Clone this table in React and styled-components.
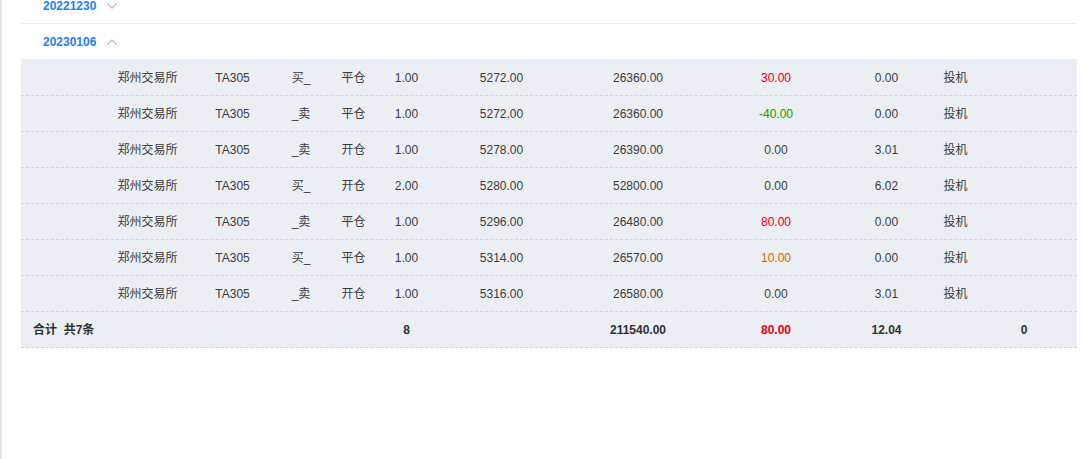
import React from "react";
import styled, { createGlobalStyle } from "styled-components";

const GlobalStyle = createGlobalStyle`
  html, body {
    margin: 0;
    padding: 0;
    background: #ffffff;
  }
  body {
    font-family: "Liberation Sans", "Noto Sans CJK SC", Arial, sans-serif;
    font-size: 12px;
    color: #333333;
  }
`;

const COLS = "84px 85px 85px 52px 53px 53px 137px 136px 140px 81px 57px 80px 1fr";

const Page = styled.div`
  height: 459px;
  overflow: hidden;
  border-left: 2px solid #e6e6e6;
  padding: 0 15px 0 19px;
  box-sizing: border-box;
`;

const List = styled.div`
  margin-top: -12px;
`;

const GroupHeader = styled.div`
  height: 35px;
  border-bottom: 1px solid #ebeef5;
  display: flex;
  align-items: center;
  gap: 11px;
  padding-left: 22px;
  color: #2680eb;
  font-weight: bold;
  font-size: 12px;
  line-height: 1;
  cursor: pointer;
`;

const Table = styled.div`
  background: #ebeef3;
`;

const Row = styled.div`
  display: grid;
  grid-template-columns: ${COLS};
  height: 35px;
  align-items: center;
  border-bottom: 1px dashed #d2d6dc;
  font-weight: ${(p) => (p.$total ? "bold" : "normal")};
  color: ${(p) => (p.$total ? "#303133" : "#3c3c3c")};
`;

const Cell = styled.div`
  text-align: ${(p) => (p.$left ? "left" : "center")};
  padding-left: ${(p) => (p.$left ? "12px" : "0")};
  white-space: nowrap;
  line-height: 1;
  color: ${(p) => p.$color || "inherit"};
`;

const Chevron = ({ up }) => (
  <svg width="10" height="6" viewBox="0 0 10 6" fill="none">
    <polyline
      points={up ? "0.7,5.3 5,1 9.3,5.3" : "0.7,0.7 5,5 9.3,0.7"}
      stroke="#b9bdc5"
      strokeWidth="1.3"
      strokeLinecap="round"
      strokeLinejoin="round"
    />
  </svg>
);

const RED = "#e0001b";
const GREEN = "#14a000";
const ORANGE = "#c86a00";

const rows = [
  { dir: "买_", off: "平仓", qty: "1.00", price: "5272.00", amt: "26360.00", pl: "30.00", plc: RED, fee: "0.00" },
  { dir: "_卖", off: "平仓", qty: "1.00", price: "5272.00", amt: "26360.00", pl: "-40.00", plc: GREEN, fee: "0.00" },
  { dir: "_卖", off: "开仓", qty: "1.00", price: "5278.00", amt: "26390.00", pl: "0.00", fee: "3.01" },
  { dir: "买_", off: "开仓", qty: "2.00", price: "5280.00", amt: "52800.00", pl: "0.00", fee: "6.02" },
  { dir: "_卖", off: "平仓", qty: "1.00", price: "5296.00", amt: "26480.00", pl: "80.00", plc: RED, fee: "0.00" },
  { dir: "买_", off: "平仓", qty: "1.00", price: "5314.00", amt: "26570.00", pl: "10.00", plc: ORANGE, fee: "0.00" },
  { dir: "_卖", off: "开仓", qty: "1.00", price: "5316.00", amt: "26580.00", pl: "0.00", fee: "3.01" },
];

export default function App() {
  return (
    <>
      <GlobalStyle />
      <Page>
        <List>
          <GroupHeader>
            <span>20221230</span>
            <Chevron />
          </GroupHeader>
          <GroupHeader>
            <span>20230106</span>
            <Chevron up />
          </GroupHeader>
          <Table>
            {rows.map((r, i) => (
              <Row key={i}>
                <Cell />
                <Cell>郑州交易所</Cell>
                <Cell>TA305</Cell>
                <Cell>{r.dir}</Cell>
                <Cell>{r.off}</Cell>
                <Cell>{r.qty}</Cell>
                <Cell>{r.price}</Cell>
                <Cell>{r.amt}</Cell>
                <Cell $color={r.plc}>{r.pl}</Cell>
                <Cell>{r.fee}</Cell>
                <Cell>投机</Cell>
                <Cell />
                <Cell />
              </Row>
            ))}
            <Row $total>
              <Cell $left>合计&nbsp;&nbsp;共7条</Cell>
              <Cell />
              <Cell />
              <Cell />
              <Cell />
              <Cell>8</Cell>
              <Cell />
              <Cell>211540.00</Cell>
              <Cell $color={RED}>80.00</Cell>
              <Cell>12.04</Cell>
              <Cell />
              <Cell>0</Cell>
              <Cell />
            </Row>
          </Table>
        </List>
      </Page>
    </>
  );
}
